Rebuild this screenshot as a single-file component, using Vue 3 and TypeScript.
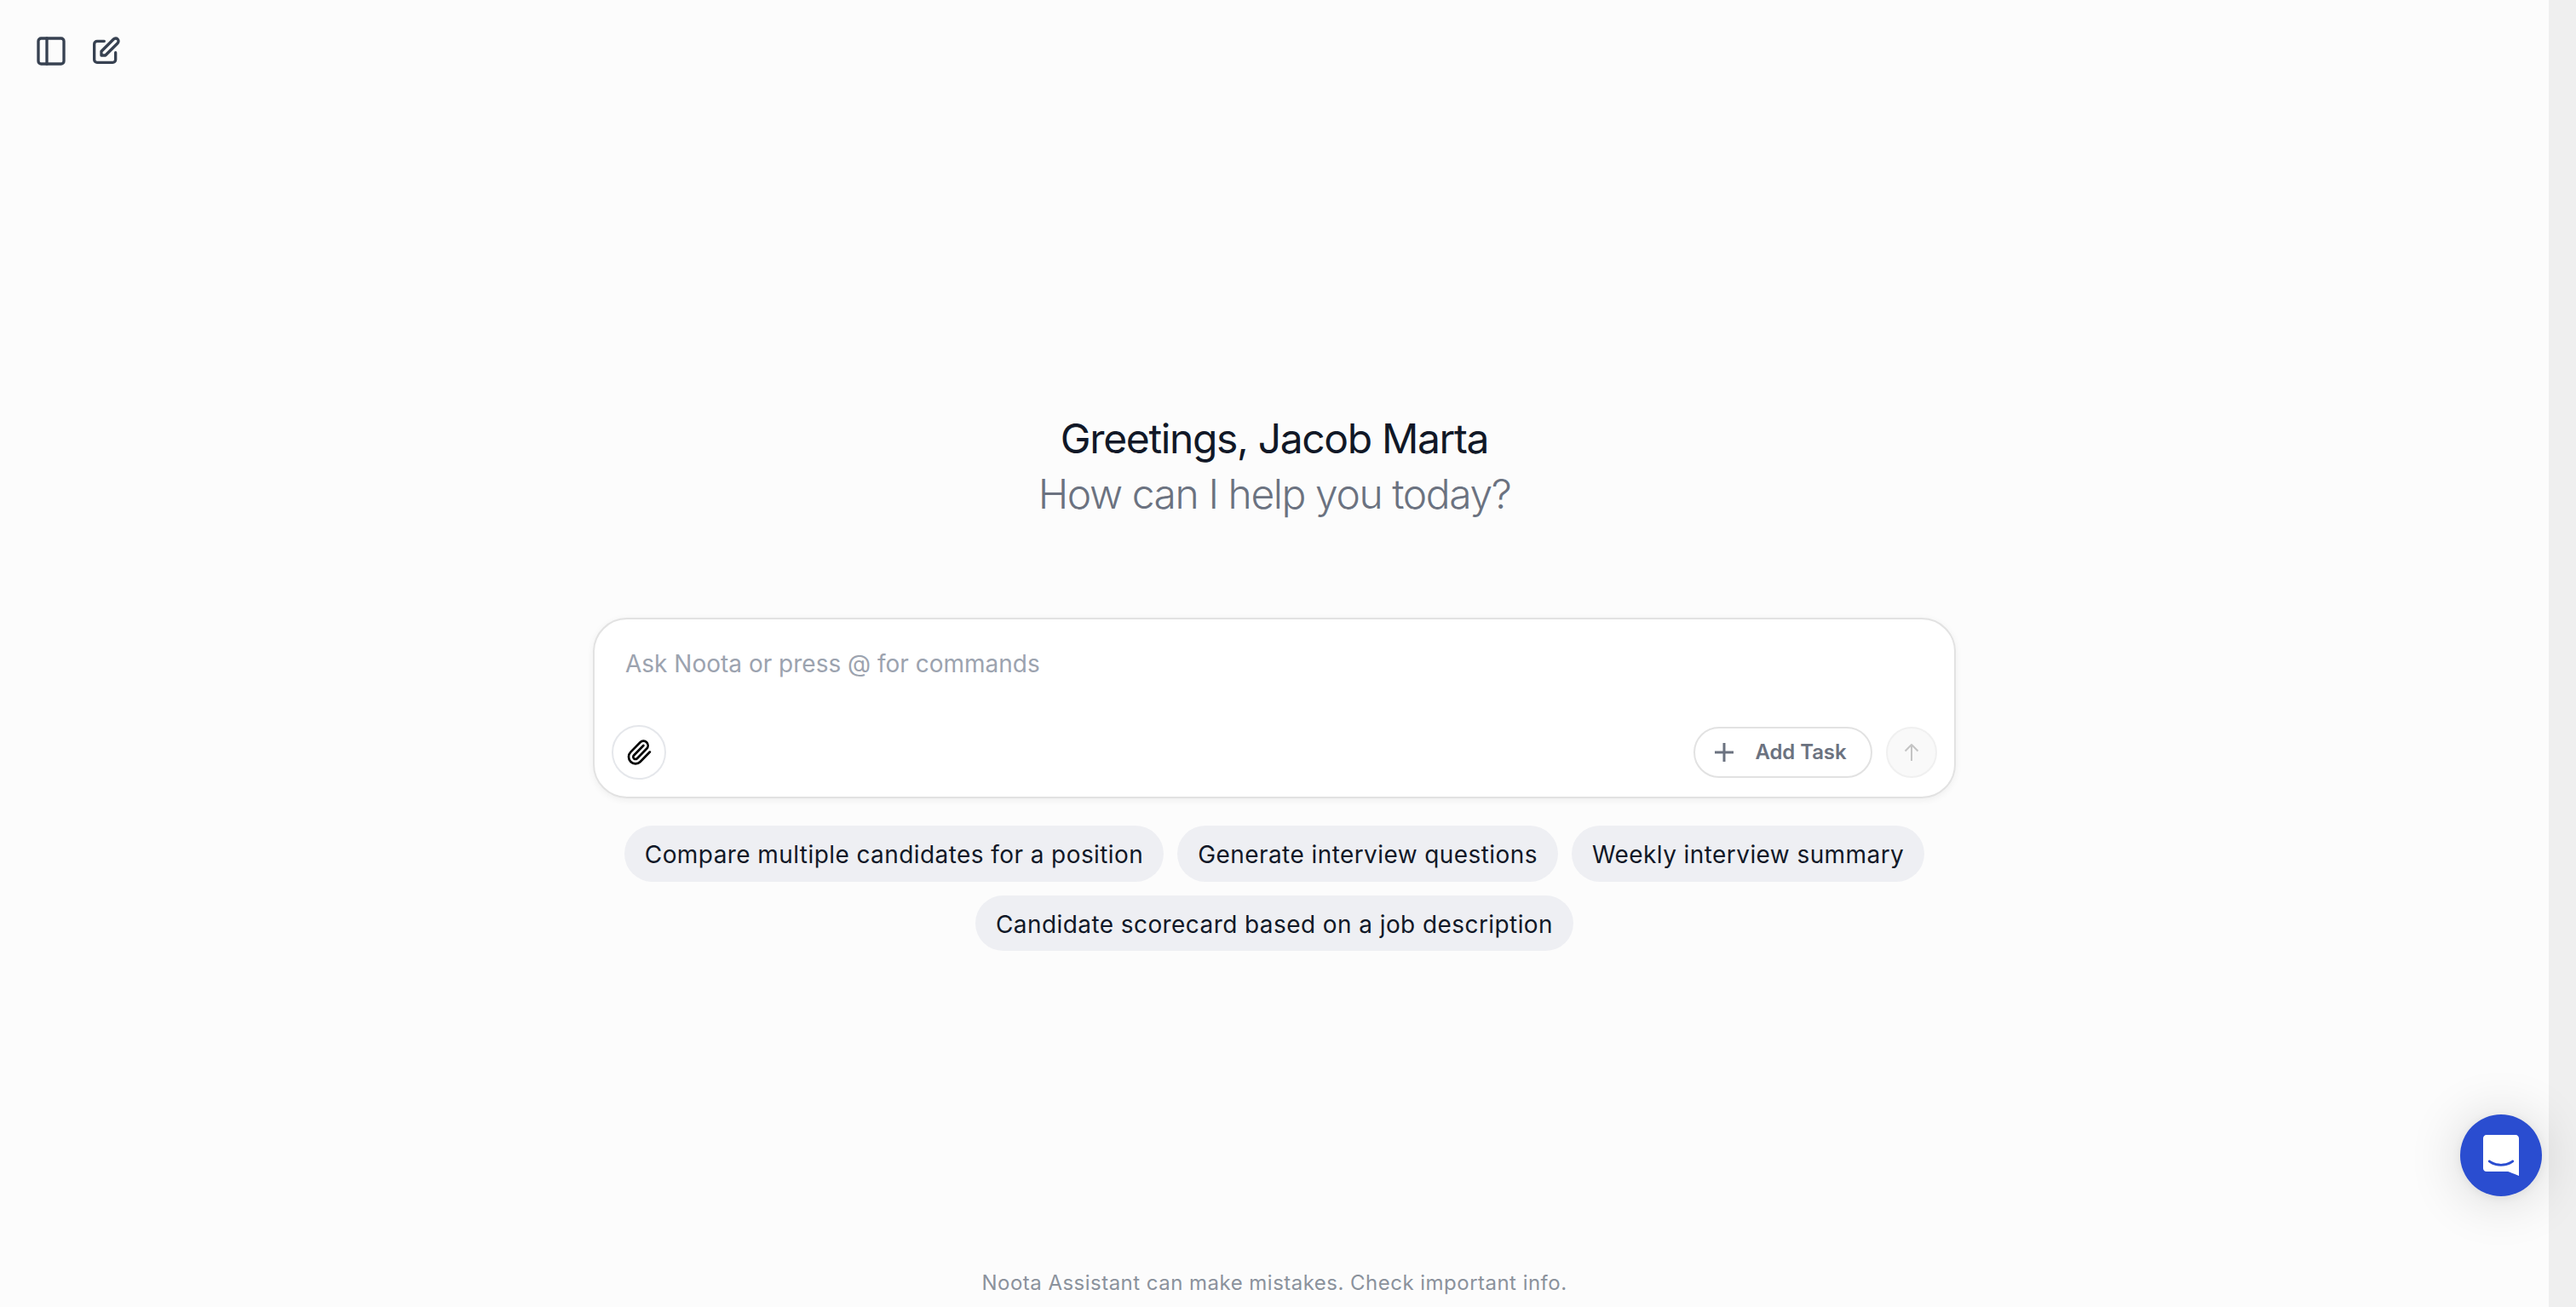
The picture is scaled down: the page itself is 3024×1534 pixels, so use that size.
<script setup lang="ts">
interface Suggestion { id: number; label: string }

const userName = 'Jacob Marta'
const suggestions: Suggestion[] = [
  { id: 1, label: 'Compare multiple candidates for a position' },
  { id: 2, label: 'Generate interview questions' },
  { id: 3, label: 'Weekly interview summary' },
  { id: 4, label: 'Candidate scorecard based on a job description' },
]
</script>

<template>
  <div class="page">
    <main class="main">
      <header class="toolbar">
        <button class="icon-btn" aria-label="Toggle sidebar">
          <svg width="40" height="40" viewBox="0 0 24 24" fill="none" stroke="currentColor" stroke-width="2" stroke-linecap="round" stroke-linejoin="round">
            <rect x="3" y="3" width="18" height="18" rx="2" />
            <path d="M9 3v18" />
          </svg>
        </button>
        <button class="icon-btn" aria-label="New conversation">
          <svg width="40" height="40" viewBox="0 0 24 24" fill="none" stroke="currentColor" stroke-width="2" stroke-linecap="round" stroke-linejoin="round">
            <path d="M11 5H6a2 2 0 00-2 2v11a2 2 0 002 2h11a2 2 0 002-2v-5m-1.414-9.414a2 2 0 112.828 2.828L11.828 15H9v-2.828l8.586-8.586z" />
          </svg>
        </button>
      </header>

      <section class="greeting">
        <h1>Greetings, {{ userName }}</h1>
        <h2>How can I help you today?</h2>
      </section>

      <form class="composer" @submit.prevent>
        <div class="prompt">Ask Noota or press @ for commands</div>
        <div class="actions">
          <button type="button" class="attach" aria-label="Attach file">
            <svg width="32" height="32" viewBox="0 0 24 24" fill="none" stroke="currentColor" stroke-width="2" stroke-linecap="round" stroke-linejoin="round">
              <path d="m16 6-8.414 8.586a2 2 0 0 0 2.829 2.829l8.414-8.586a4 4 0 1 0-5.657-5.657l-8.379 8.551a6 6 0 1 0 8.485 8.485l8.379-8.551" />
            </svg>
          </button>
          <div class="right">
            <button type="button" class="task">
              <svg width="22" height="22" viewBox="0 0 22 22" fill="none" stroke="currentColor" stroke-width="3"><path d="M11 0v22M0 11h22" /></svg>
              <span>Add Task</span>
            </button>
            <button type="submit" class="send" aria-label="Send">
              <svg width="20" height="22" viewBox="0 0 20 22" fill="none" stroke="currentColor" stroke-width="2" stroke-linejoin="round"><path d="M10 21V2M2.5 9.5L10 2l7.5 7.5" /></svg>
            </button>
          </div>
        </div>
      </form>

      <div class="chips">
        <button v-for="s in suggestions" :key="s.id" class="chip">{{ s.label }}</button>
      </div>

      <footer class="note">Noota Assistant can make mistakes. Check important info.</footer>
    </main>
    <aside class="gutter"></aside>
    <button class="launcher" aria-label="Open chat">
      <svg width="42" height="48" viewBox="0 0 28 32"><path fill="#fff" d="M28 32s-4.714-1.855-8.527-3.34H2.6C1.16 28.66 0 27.5 0 26.1V2.6C0 1.16 1.16 0 2.6 0h22.8C26.84 0 28 1.16 28 2.6V32zm-4.139-11.982a.88.88 0 00-1.292-.105c-.03.026-3.015 2.681-8.57 2.681-5.486 0-8.517-2.636-8.571-2.684a.88.88 0 00-1.29.107 1.01 1.01 0 00-.219.708.992.992 0 00.318.664c.142.128 3.537 3.15 9.762 3.15 6.226 0 9.621-3.022 9.763-3.15a.992.992 0 00.317-.664 1.01 1.01 0 00-.218-.707z" /></svg>
    </button>
  </div>
</template>

<style>
body { margin: 0; overflow: hidden; }
</style>

<style scoped>
.page { display: flex; width: 100%; height: 1534px; position: relative; overflow: hidden; background: #fcfcfc; font-family: Inter, "Liberation Sans", sans-serif; }
.main { flex: 1; display: flex; flex-direction: column; align-items: center; box-sizing: border-box; padding-top: 40px; }
.gutter { width: 32px; background: #efefef; }
button { font: inherit; margin: 0; padding: 0; border: 0; background: none; box-sizing: border-box; }
svg { display: block; flex: none; }
.toolbar { align-self: stretch; display: flex; gap: 24px; padding-left: 40px; height: 40px; }
.icon-btn { width: 40px; height: 40px; color: #374151; }
.greeting { margin-top: 402px; text-align: center; }
h1, h2 { margin: 0; font-size: 48px; line-height: 65px; white-space: nowrap; }
h1 { font-weight: 400; letter-spacing: -1.36px; color: #111827; }
h2 { font-weight: 300; letter-spacing: -1.44px; color: #6b7280; }
.composer { width: 1600px; height: 212px; margin-top: 113px; box-sizing: border-box; border: 2px solid #e2e2e2; border-radius: 40px; background: #fff; box-shadow: 0 2px 8px rgba(0, 0, 0, 0.06); padding: 32px 20px 20px; display: flex; flex-direction: column; justify-content: space-between; }
.prompt { font-size: 28px; line-height: 40px; color: #9ca3af; padding-left: 16px; }
.actions { display: flex; align-items: center; justify-content: space-between; }
.attach { width: 64px; height: 64px; border: 2px solid #e5e7eb; border-radius: 50%; display: flex; align-items: center; justify-content: center; color: #000; }
.right { display: flex; gap: 16px; }
.task { width: 210px; height: 60px; border: 2px solid #e2e2e2; border-radius: 30px; display: flex; align-items: center; gap: 25.5px; padding-left: 23px; color: #6b7280; font-size: 24px; font-weight: 600; line-height: 32px; letter-spacing: -0.1px; white-space: nowrap; }
.send { width: 60px; height: 60px; border: 2px solid #f0f0f0; border-radius: 50%; background: #f9f9f9; color: #c4c4c4; display: flex; align-items: center; justify-content: center; }
.chips { width: 1600px; margin-top: 32.25px; display: flex; flex-wrap: wrap; justify-content: center; gap: 16px; }
.chip { height: 65.5px; padding: 2px 24px 0; border-radius: 33px; background: #eeeff3; color: #111827; font-size: 28px; line-height: 40px; letter-spacing: 0.015em; white-space: nowrap; }
.note { margin-top: auto; margin-bottom: 12px; font-size: 24px; line-height: 32px; letter-spacing: 0.48px; color: #8b929c; }
.launcher { position: absolute; right: 40px; bottom: 130px; width: 96px; height: 96px; border-radius: 50%; background: #2a4dd0; display: flex; align-items: center; justify-content: center; box-shadow: 0 2px 12px rgba(0, 0, 0, 0.06), 0 4px 64px rgba(0, 0, 0, 0.16); }
</style>
